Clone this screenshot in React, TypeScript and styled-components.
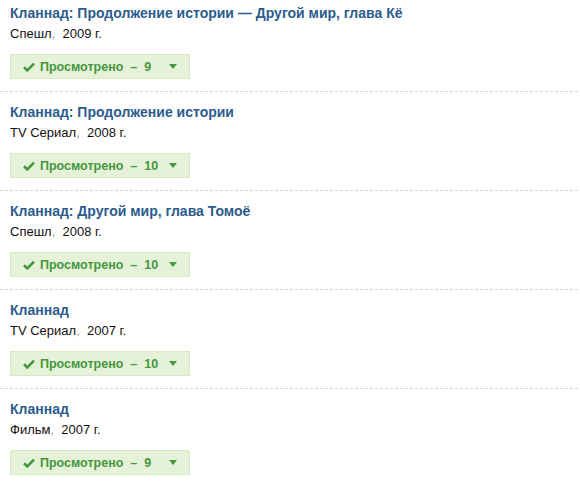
import React from 'react';
import styled, { createGlobalStyle } from 'styled-components';

const Global = createGlobalStyle`
  body {
    margin: 0;
    background: #fff;
    font-family: "Liberation Sans", Arial, sans-serif;
  }
`;

const List = styled.div`
  width: 578px;
  padding-top: 4px;
`;

const Item = styled.div`
  padding: 0 0 12px 10px;
  border-bottom: 1px dashed #d4d4d4;
  & + & {
    padding-top: 11px;
  }
  &:last-child {
    border-bottom: none;
  }
`;

const Title = styled.a`
  display: block;
  font-size: 14px;
  line-height: 18px;
  font-weight: bold;
  color: #2b5c8d;
  text-decoration: none;
`;

const Meta = styled.div`
  margin-top: 4px;
  font-size: 13px;
  line-height: 16px;
  color: #111;
`;

const Comma = styled.span`
  color: #9a9a9a;
`;

const Status = styled.button`
  margin-top: 12px;
  width: 180px;
  height: 25px;
  display: flex;
  align-items: center;
  padding: 0 0 0 12px;
  background: #e6f2d7;
  border: 1px solid #d6e9c2;
  border-radius: 0;
  font-family: inherit;
  font-size: 12.5px;
  font-weight: bold;
  color: #44963f;
  cursor: pointer;
`;

const Label = styled.span`
  margin-left: 5px;
  flex: 1;
  text-align: left;
`;

const Caret = styled.span`
  width: 0;
  height: 0;
  margin-right: 12px;
  border-left: 4px solid transparent;
  border-right: 4px solid transparent;
  border-top: 5px solid #44963f;
`;

const Check = () => (
  <svg width="12" height="10" viewBox="0 0 12 10">
    <path d="M1 5.2 L4.3 8.4 L11 1.6" fill="none" stroke="#44963f" strokeWidth="2.6" />
  </svg>
);

const items = [
  { title: 'Кланнад: Продолжение истории — Другой мир, глава Кё', kind: 'Спешл', year: 2009, eps: 9 },
  { title: 'Кланнад: Продолжение истории', kind: 'TV Сериал', year: 2008, eps: 10 },
  { title: 'Кланнад: Другой мир, глава Томоё', kind: 'Спешл', year: 2008, eps: 10 },
  { title: 'Кланнад', kind: 'TV Сериал', year: 2007, eps: 10 },
  { title: 'Кланнад', kind: 'Фильм', year: 2007, eps: 9 },
];

const App = () => (
  <>
    <Global />
    <List>
      {items.map((it, i) => (
        <Item key={i}>
          <Title href="#">{it.title}</Title>
          <Meta>
            {it.kind}<Comma>,</Comma>&nbsp; {it.year} г.
          </Meta>
          <Status>
            <Check />
            <Label>Просмотрено &nbsp;–&nbsp; {it.eps}</Label>
            <Caret />
          </Status>
        </Item>
      ))}
    </List>
  </>
);

export default App;
